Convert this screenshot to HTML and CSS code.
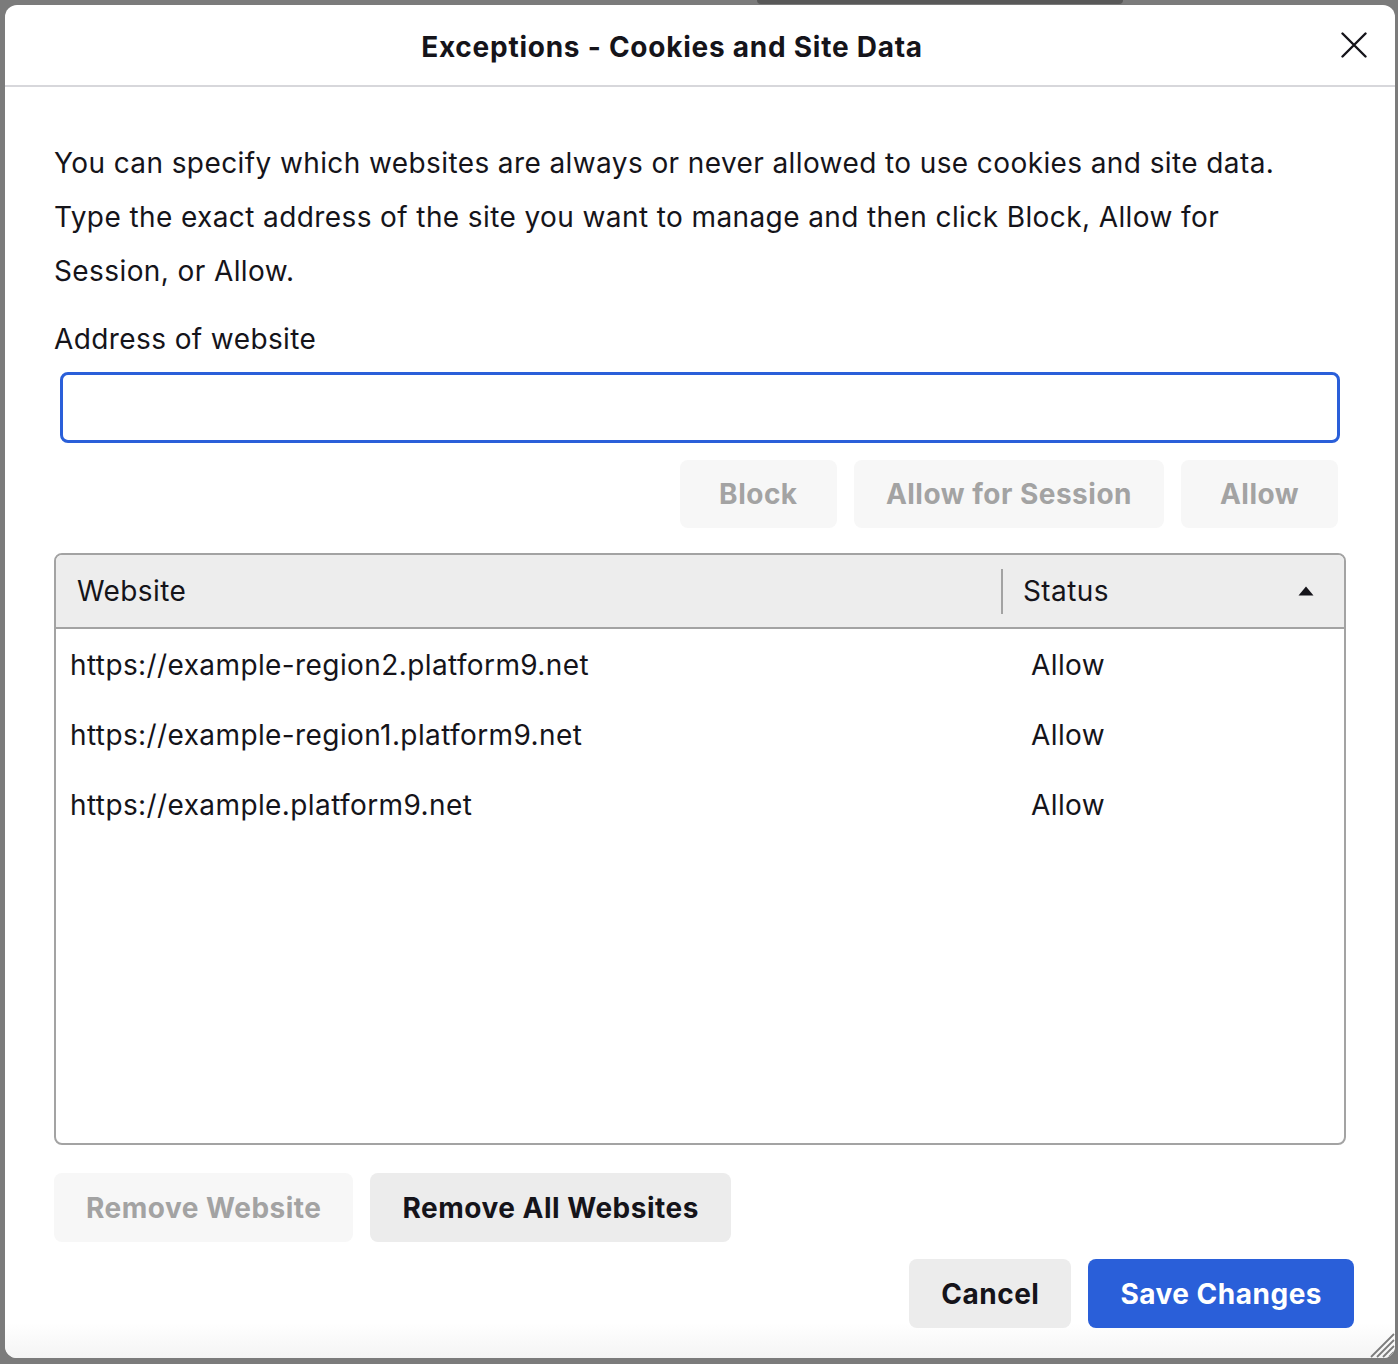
FILE: index.html
```html
<!DOCTYPE html>
<html lang="en">
<head>
    <meta charset="UTF-8">
    <title>Exceptions - Cookies and Site Data</title>
    <link rel="stylesheet" href="styles.css">
</head>
<body>
    <div class="tab-behind"></div>

    <div class="dialog">
        <div class="dialog-header">
            <h1>Exceptions - Cookies and Site Data</h1>
            <button class="close-btn" aria-label="Close">
                <svg width="26" height="26" viewBox="0 0 26 26">
                    <path d="M1.5 1.5 L24.5 24.5 M24.5 1.5 L1.5 24.5" stroke="#15141a" stroke-width="2.4" stroke-linecap="round" fill="none"/>
                </svg>
            </button>
        </div>

        <div class="dialog-body">
            <p class="intro">You can specify which websites are always or never allowed to use cookies and site data.</p>
            <p class="intro">Type the exact address of the site you want to manage and then click Block, Allow for Session, or Allow.</p>

            <label class="field-label" for="siteInput">Address of website</label>
            <input type="text" id="siteInput" class="site-input">

            <div class="action-row">
                <button class="btn" disabled>Block</button>
                <button class="btn" disabled>Allow for Session</button>
                <button class="btn" disabled>Allow</button>
            </div>

            <div class="site-list">
                <div class="list-head">
                    <div class="head-website">Website</div>
                    <div class="head-divider"></div>
                    <div class="head-status">
                        <span>Status</span>
                        <svg class="sort-arrow" width="16" height="10" viewBox="0 0 16 10">
                            <path d="M8 0.5 L15.5 9.5 L0.5 9.5 Z" fill="#15141a"/>
                        </svg>
                    </div>
                </div>
                <div class="list-row">
                    <div class="cell-site">https://example-region2.platform9.net</div>
                    <div class="cell-status">Allow</div>
                </div>
                <div class="list-row">
                    <div class="cell-site">https://example-region1.platform9.net</div>
                    <div class="cell-status">Allow</div>
                </div>
                <div class="list-row">
                    <div class="cell-site">https://example.platform9.net</div>
                    <div class="cell-status">Allow</div>
                </div>
            </div>

            <div class="remove-row">
                <button class="btn" disabled>Remove Website</button>
                <button class="btn">Remove All Websites</button>
            </div>
        </div>

        <div class="dialog-footer">
            <button class="btn">Cancel</button>
            <button class="btn btn-primary">Save Changes</button>
        </div>

        <svg class="resize-grip" width="28" height="26" viewBox="0 0 28 26">
            <path d="M27 2 L4 25 M27 8 L10 25 M27 14 L16 25 M27 20 L22 25" stroke="#7c7c7c" stroke-width="1.8" fill="none"/>
        </svg>
    </div>
</body>
</html>
```

FILE: styles.css
```css
* {
    margin: 0;
    padding: 0;
    box-sizing: border-box;
}

body {
    font-family: Inter, "Liberation Sans", sans-serif;
    background: #7b7b7b;
    color: #15141a;
    width: 1398px;
    height: 1364px;
    overflow: hidden;
    position: relative;
}

.tab-behind {
    position: absolute;
    left: 757px;
    top: -4px;
    width: 366px;
    height: 8px;
    background: #585858;
    border-radius: 6px;
}

.dialog {
    position: absolute;
    left: 5px;
    top: 5px;
    width: 1390px;
    height: 1353px;
    background: #fff;
    border-radius: 12px;
    display: flex;
    flex-direction: column;
    overflow: hidden;
    font-size: 28px;
    letter-spacing: 0.4px;
}

.dialog-header {
    height: 82px;
    border-bottom: 2px solid #d7d7db;
    display: flex;
    align-items: center;
    justify-content: center;
    position: relative;
}

.dialog-header h1 {
    font-size: 28px;
    font-weight: 700;
    letter-spacing: 0.75px;
    margin-left: -56px;
    margin-top: 3px;
}

.close-btn {
    position: absolute;
    right: 28px;
    top: 27px;
    width: 26px;
    height: 26px;
    background: none;
    border: none;
    display: flex;
}

.dialog-body {
    padding: 49px 49px 0;
    display: flex;
    flex-direction: column;
}

.intro {
    line-height: 54px;
    max-width: 1250px;
}

.field-label {
    line-height: 54px;
    margin-top: 14px;
}

.site-input {
    margin: 6px 6px 0;
    height: 71px;
    border: 3px solid #2a5fd9;
    border-radius: 8px;
    outline: none;
    font-size: 28px;
    padding: 0 14px;
}

.btn {
    font-family: inherit;
    font-size: 28px;
    font-weight: 700;
    letter-spacing: 0.5px;
    height: 69px;
    min-width: 157px;
    padding: 0 32px;
    border: none;
    border-radius: 8px;
    background: #ececec;
    color: #15141a;
}

.btn:disabled {
    background: #f7f7f7;
    color: #a3a3a3;
}

.btn-primary {
    background: #2a5fd9;
    color: #fff;
}

.action-row {
    display: flex;
    justify-content: flex-end;
    gap: 17px;
    margin: 17px 8px 0 0;
}

.action-row .btn {
    height: 68px;
}

.site-list {
    margin-top: 25px;
    height: 592px;
    border: 2px solid #a3a3a3;
    border-radius: 8px;
    overflow: hidden;
}

.list-head {
    height: 74px;
    background: #ededed;
    border-bottom: 2px solid #a3a3a3;
    display: flex;
    align-items: center;
}

.head-website {
    width: 945px;
    padding-left: 21px;
}

.head-divider {
    width: 2px;
    height: 45px;
    background: #a3a3a3;
}

.head-status {
    flex: 1;
    display: flex;
    align-items: center;
    justify-content: space-between;
    padding: 0 30px 0 20px;
}

.list-row {
    height: 70px;
    display: flex;
    align-items: center;
    padding-left: 14px;
    padding-top: 2px;
}

.cell-site {
    width: 961px;
}

.remove-row {
    display: flex;
    gap: 17px;
    margin-top: 28px;
}

.dialog-footer {
    flex: 1;
    display: flex;
    justify-content: flex-end;
    align-items: flex-start;
    gap: 17px;
    padding: 17px 41px 0;
    background: linear-gradient(to bottom, #fff 0%, #fff 70%, #f4f4f4 100%);
}

.resize-grip {
    position: absolute;
    right: 0;
    bottom: 0;
}
```
